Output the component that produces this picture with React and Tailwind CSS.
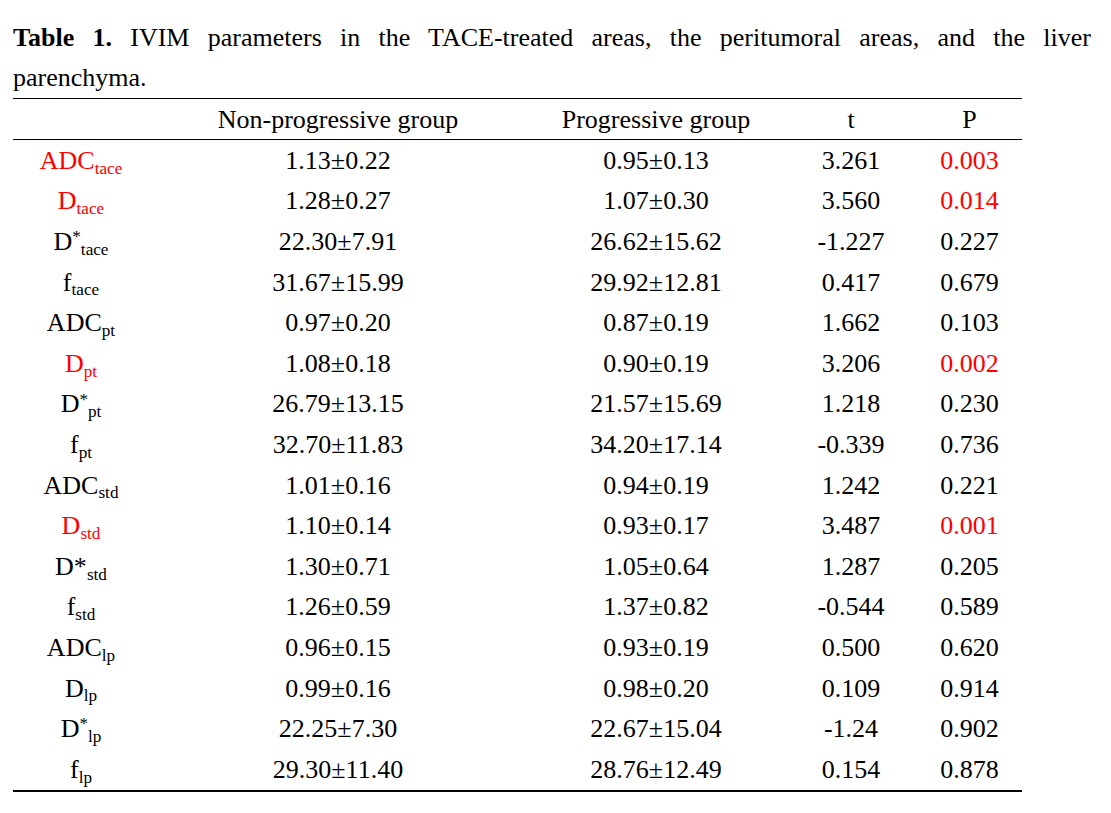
import React from "react";

const rows = [
  { name: "ADC", sub: "tace", red: true, a: "1.13±0.22", b: "0.95±0.13", t: "3.261", p: "0.003", pRed: true },
  { name: "D", sub: "tace", red: true, a: "1.28±0.27", b: "1.07±0.30", t: "3.560", p: "0.014", pRed: true },
  { name: "D", sup: "*", sub: "tace", a: "22.30±7.91", b: "26.62±15.62", t: "-1.227", p: "0.227" },
  { name: "f", sub: "tace", a: "31.67±15.99", b: "29.92±12.81", t: "0.417", p: "0.679" },
  { name: "ADC", sub: "pt", a: "0.97±0.20", b: "0.87±0.19", t: "1.662", p: "0.103" },
  { name: "D", sub: "pt", red: true, a: "1.08±0.18", b: "0.90±0.19", t: "3.206", p: "0.002", pRed: true },
  { name: "D", sup: "*", sub: "pt", a: "26.79±13.15", b: "21.57±15.69", t: "1.218", p: "0.230" },
  { name: "f", sub: "pt", a: "32.70±11.83", b: "34.20±17.14", t: "-0.339", p: "0.736" },
  { name: "ADC", sub: "std", a: "1.01±0.16", b: "0.94±0.19", t: "1.242", p: "0.221" },
  { name: "D", sub: "std", red: true, a: "1.10±0.14", b: "0.93±0.17", t: "3.487", p: "0.001", pRed: true },
  { name: "D*", sub: "std", a: "1.30±0.71", b: "1.05±0.64", t: "1.287", p: "0.205" },
  { name: "f", sub: "std", a: "1.26±0.59", b: "1.37±0.82", t: "-0.544", p: "0.589" },
  { name: "ADC", sub: "lp", a: "0.96±0.15", b: "0.93±0.19", t: "0.500", p: "0.620" },
  { name: "D", sub: "lp", a: "0.99±0.16", b: "0.98±0.20", t: "0.109", p: "0.914" },
  { name: "D", sup: "*", sub: "lp", a: "22.25±7.30", b: "22.67±15.04", t: "-1.24", p: "0.902" },
  { name: "f", sub: "lp", a: "29.30±11.40", b: "28.76±12.49", t: "0.154", p: "0.878" },
];

const cols = "grid grid-cols-[136px_378px_258px_132px_105px]";

function Param({ r }) {
  return (
    <span className={r.red ? "text-[#ff0000]" : "text-black"}>
      {r.name}
      {r.sup && <span className="relative top-[-0.45em] text-[0.66em]">{r.sup}</span>}
      <span className="relative top-[0.28em] text-[0.66em]">{r.sub}</span>
    </span>
  );
}

export default function App() {
  return (
    <div className="min-h-[813px] w-[1111px] bg-white text-black font-['Liberation_Serif','Times_New_Roman',serif] text-[26px]">
      {/* caption: first line justified edge to edge, second line left */}
      <div className="pt-[18px] pl-[13px] pr-[20px] leading-[40px]">
        <p className="text-justify [text-align-last:justify]">
          <b>Table 1.</b> IVIM parameters in the TACE-treated areas, the peritumoral areas, and the liver
        </p>
        <p>parenchyma.</p>
      </div>

      <div className="ml-[13px] w-[1009px] border-t border-black border-b-2">
        <div className={`${cols} h-[41px] items-center text-center border-b border-black`}>
          <div />
          <div>Non-progressive group</div>
          <div>Progressive group</div>
          <div>t</div>
          <div>P</div>
        </div>
        {rows.map((r, i) => (
          <div key={i} className={`${cols} h-[40.6px] items-center text-center`}>
            <div><Param r={r} /></div>
            <div>{r.a}</div>
            <div>{r.b}</div>
            <div>{r.t}</div>
            <div className={r.pRed ? "text-[#ff0000]" : ""}>{r.p}</div>
          </div>
        ))}
      </div>
    </div>
  );
}
